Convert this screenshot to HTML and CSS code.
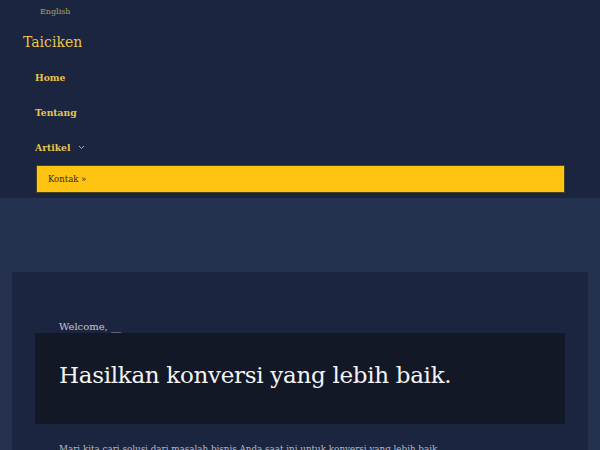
FILE: index.html
```html
<!DOCTYPE html>
<html lang="id">
<head>
<meta charset="utf-8">
<title>Taiciken</title>
<link rel="stylesheet" href="styles.css">
</head>
<body>
<header class="site-header">
  <div class="lang">English</div>
  <div class="site-title">Taiciken</div>
  <nav class="nav">
    <a class="nav-item" href="#">Home</a>
    <a class="nav-item" href="#">Tentang</a>
    <a class="nav-item" href="#">Artikel <svg class="chev" width="7" height="5" viewBox="0 0 7 5"><path d="M1 1 L3.5 3.5 L6 1" fill="none" stroke="#c9b25a" stroke-width="1"/></svg></a>
    <div class="submenu"><a href="#">Kontak »</a></div>
  </nav>
</header>
<main class="main">
  <section class="card">
    <p class="welcome">Welcome, __</p>
    <div class="hero">
      <h1>Hasilkan konversi yang lebih baik.</h1>
    </div>
    <p class="lead">Mari kita cari solusi dari masalah bisnis Anda saat ini untuk konversi yang lebih baik.</p>
  </section>
</main>
</body>
</html>
```

FILE: styles.css
```css
html, body {
  margin: 0;
  padding: 0;
}
body {
  background: #25324f;
  font-family: "DejaVu Serif", "Liberation Serif", serif;
  height: 450px;
  overflow: hidden;
}
.site-header {
  background: #1c2540;
  height: 198px;
  box-sizing: border-box;
  padding-top: 6px;
}
.lang {
  font-size: 8px;
  color: #b0a266;
  padding-left: 40px;
  line-height: 12px;
}
.site-title {
  font-size: 14px;
  color: #e8c448;
  padding-left: 23px;
  margin-top: 15px;
  line-height: 18px;
}
.nav {
  display: flex;
  flex-direction: column;
  margin-top: 9px;
  padding: 0 35px 0 35px;
}
.nav-item {
  display: flex;
  align-items: center;
  gap: 6px;
  font-size: 9.2px;
  font-weight: bold;
  color: #e8c448;
  text-decoration: none;
  height: 35px;
}
.chev {
  margin-left: 2px;
}
.submenu {
  margin-top: 0;
  margin-left: 1px;
  background: #ffc312;
  border: 1px solid #4a4222;
  height: 26px;
  display: flex;
  align-items: center;
  padding-left: 11px;
}
.submenu a {
  font-size: 8.5px;
  color: #2a2a2a;
  text-decoration: none;
}
.main {
  padding: 74px 12px 0;
}
.card {
  background: #1c2540;
  padding: 49px 23px 20px;
}
.welcome {
  margin: 0 0 0 24px;
  font-size: 10px;
  color: #c3c7d3;
  line-height: 12px;
}
.hero {
  background: #131826;
  padding: 24px 24px 31px;
}
.hero h1 {
  margin: 0;
  font-weight: normal;
  font-size: 23px;
  letter-spacing: -0.3px;
  line-height: 36px;
  color: #f4f4f6;
}
.lead {
  margin: 19px 0 0 24px;
  font-size: 8.75px;
  line-height: 12px;
  color: #b7bccb;
}
```
